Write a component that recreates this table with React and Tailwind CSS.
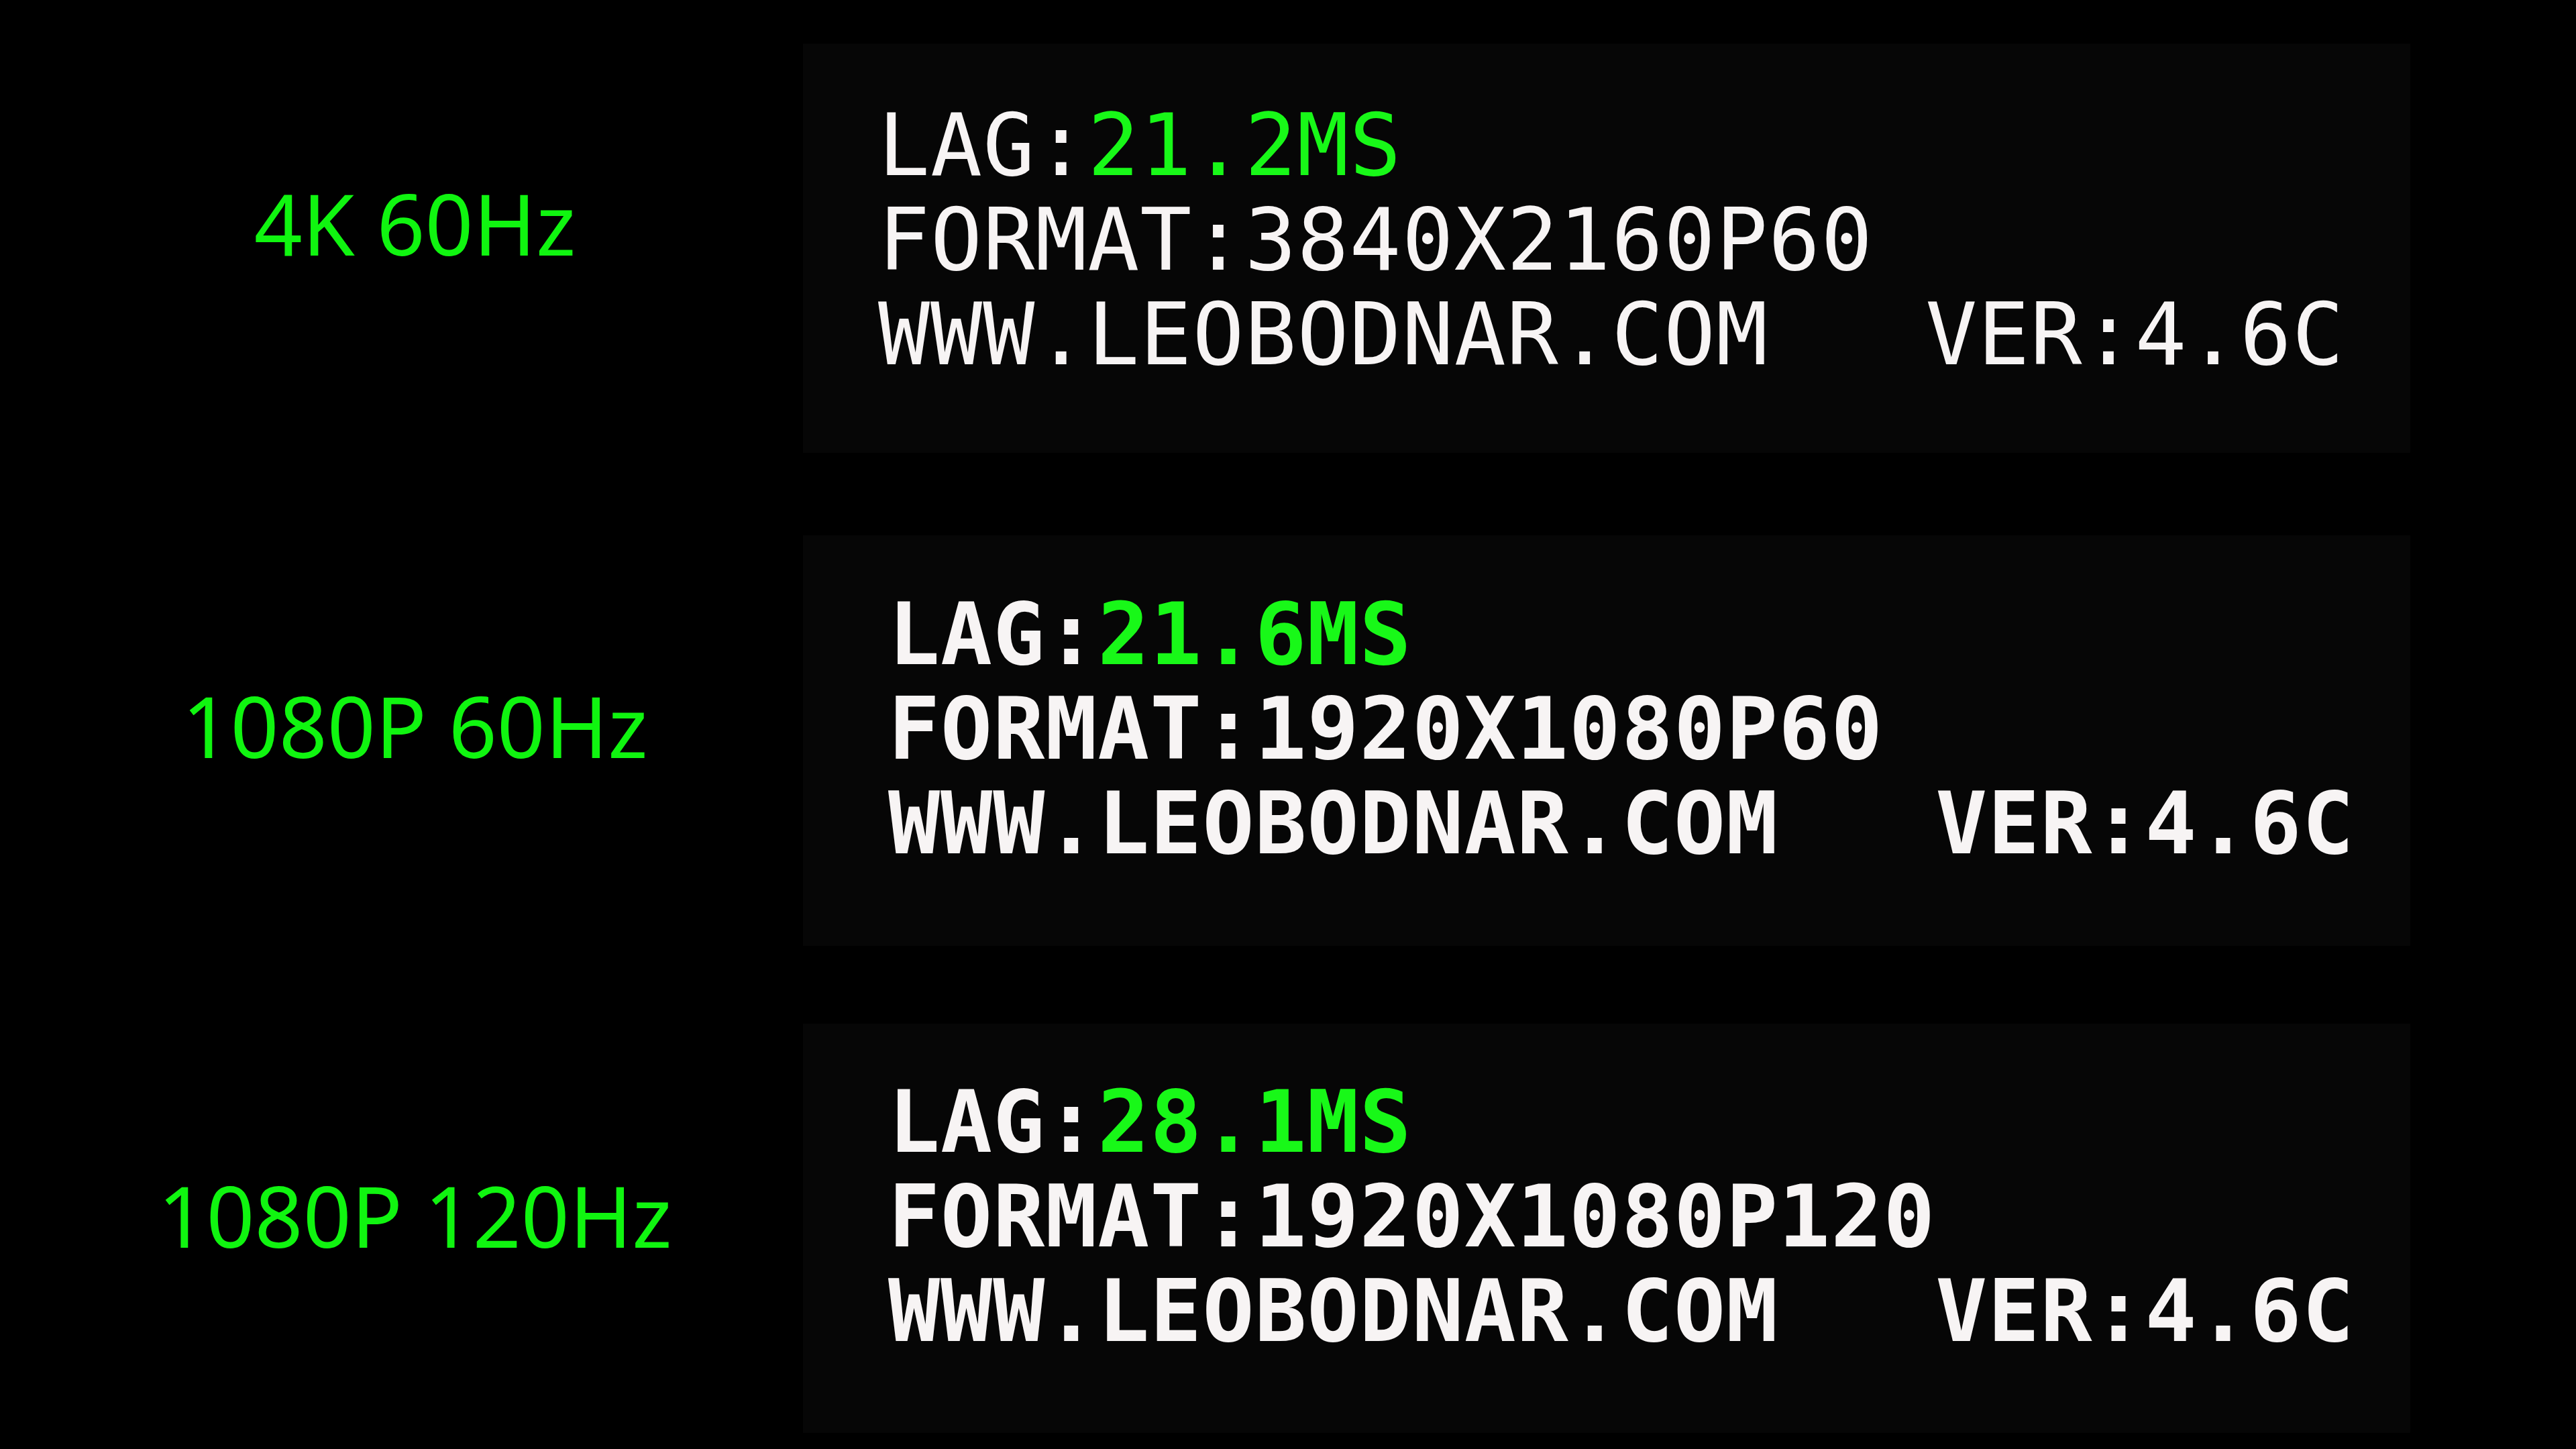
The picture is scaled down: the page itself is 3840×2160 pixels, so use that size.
const rows = [
  { label: '4K 60Hz', lag: '21.2MS', format: '3840X2160P60', bold: false, h: 'h-[610px]', mt: 'mt-[65px]', pt: 'pt-[81px]', pl: 'pl-[112px]', lift: 'pb-[76px]' },
  { label: '1080P 60Hz', lag: '21.6MS', format: '1920X1080P60', bold: true, h: 'h-[612px]', mt: 'mt-[123px]', pt: 'pt-[77px]', pl: 'pl-[127px]', lift: 'pb-[46px]' },
  { label: '1080P 120Hz', lag: '28.1MS', format: '1920X1080P120', bold: true, h: 'h-[610px]', mt: 'mt-[116px]', pt: 'pt-[76px]', pl: 'pl-[127px]', lift: 'pb-[40px]' },
];

function Screen({ row }) {
  return (
    <div className={`flex ${row.mt}`}>
      <div className={`flex w-[1197px] shrink-0 items-center justify-center pl-[40px] ${row.lift}`}>
        <span className="font-['Noto_Sans',sans-serif] text-[126px] leading-none text-[#10f510]">{row.label}</span>
      </div>
      <div className={`w-[2396px] ${row.h} ${row.pt} ${row.pl} bg-[#060606]`}>
        <div className={`font-['DejaVu_Sans_Mono',monospace] text-[128px] leading-[141px] tracking-[1px] whitespace-pre text-[#f7f4f4] ${row.bold ? 'font-bold' : 'font-normal'}`}>
          <div>LAG:<span className="text-[#18f818]">{row.lag}</span></div>
          <div>FORMAT:{row.format}</div>
          <div>{'WWW.LEOBODNAR.COM   VER:4.6C'}</div>
        </div>
      </div>
    </div>
  );
}

export default function App() {
  return (
    <div className="h-[2160px] w-[3840px] overflow-hidden bg-black">
      {rows.map((row) => (
        <Screen key={row.label} row={row} />
      ))}
    </div>
  );
}
